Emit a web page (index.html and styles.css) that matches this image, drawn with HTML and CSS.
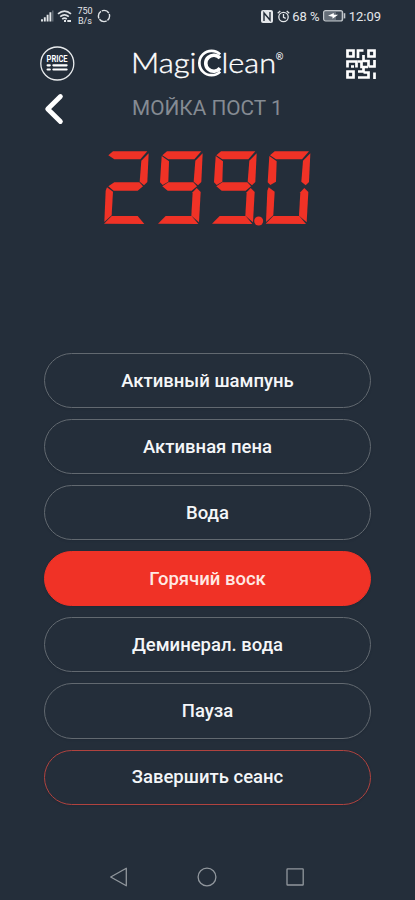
FILE: index.html
```
<!DOCTYPE html>
<html lang="ru">
<head>
<meta charset="utf-8">
<meta name="viewport" content="width=device-width">
<title>MagiClean</title>
<link rel="stylesheet" href="styles.css">
</head>
<body>
<div class="status">
  <svg class="signal" width="14" height="14" viewBox="0 0 14 14"><path d="M2 10.2v2.3M4.8 8.2v4.3M7.6 5.8v6.7M10.4 3.3v9.2" stroke="#e4e7ea" stroke-width="1.9"/><path d="M12.8 1.5v11" stroke="#6d7680" stroke-width="1.2"/></svg>
  <svg class="wifi" width="16" height="14" viewBox="0 0 16 14" fill="none" stroke="#dfe3e6" stroke-width="1.7"><path d="M1 4.8q6.5-5.5 13 0M3.2 7.6q4.3-3.6 8.6 0M5.2 10.1q2.3-2 4.6 0"/><path d="M7 12h2M10.3 12H14" stroke-width="2"/></svg>
  <div class="speed"><span>750</span><span>B/s</span></div>
  <svg class="ring" width="14" height="14" viewBox="0 0 14 14"><circle cx="7" cy="7" r="5.6" fill="none" stroke="#dfe3e6" stroke-width="1.4" stroke-dasharray="7.9 .9" stroke-dashoffset="3"/></svg>
  <span class="spacer"></span>
  <svg class="nfc" width="12" height="13" viewBox="0 0 12 13"><rect width="12" height="13" rx="2" fill="#e4e7ea"/><path d="M3 11V3l6 7V2" fill="none" stroke="#242e3a" stroke-width="1.4"/></svg>
  <svg class="alarm" width="13" height="13" viewBox="0 0 13 13" fill="none" stroke="#e4e7ea" stroke-width="1.3"><circle cx="6.5" cy="7" r="4.7"/><path d="M6.5 4v3.3l2.2 1M.7 3.2 3.3 1M12.3 3.2 9.7 1"/></svg>
  <span class="percent">68 %</span>
  <svg class="battery" width="23" height="12" viewBox="0 0 23 12"><rect x=".6" y=".6" width="19" height="10.4" rx="2" fill="#656e78" stroke="#c2c7cb" stroke-width="1.2"/><path d="M13 2h5v8h-5z" fill="#3d4752"/><path d="M5 5.8 10.8 3v1.8h4.3L9.5 8.7V6.8z" fill="#fff"/><path d="M21.5 3.2v5.2" stroke="#c2c7cb" stroke-width="1.6"/></svg>
  <span class="clock">12:09</span>
</div>

<header class="brandbar">
  <svg class="price" width="36" height="36" viewBox="0 0 36 36"><circle cx="18.3" cy="18.5" r="16.5" fill="none" stroke="#e8ebed" stroke-width="1.3"/><text x="7.6" y="17" textLength="21" lengthAdjust="spacingAndGlyphs">PRICE</text><path d="M8.6 20.3h2.2M14.4 20.3h13.2M8.6 24.5h2.2M14.4 24.5h13.2" stroke="#fff" stroke-width="2.2" stroke-linecap="round"/></svg>
  <svg class="logo" width="154" height="34" viewBox="0 0 154 34">
    <text x="0" y="26.6" textLength="65.5" lengthAdjust="spacingAndGlyphs">Magi</text>
    <text x="90.5" y="26.6" textLength="54.5" lengthAdjust="spacingAndGlyphs">lean</text>
    <text class="mark" x="144.8" y="14">®</text>
    <path d="M89.2 8.4A12.2 12.2 0 1 0 89.2 25.6" fill="none" stroke="#fff" stroke-width="2.7"/>
    <path d="M89 12.2A8 8 0 1 0 89 22.2" fill="none" stroke="#fff" stroke-width="3.6"/>
  </svg>
  <svg class="qr" width="30" height="30" viewBox="0 0 30 30" fill="none" stroke="#fff" stroke-width="2.7"><path d="M1.5 1.5h6v6h-6zM22.5 1.5h6v6h-6zM1.5 22.5h6v6h-6z"/><path d="M12 9V1.5h5.5M17.5 6v6H22.5v5.5M1.5 18.5V12.5h9v6M5 17.5h3M12 12.5h3.5V18H22M22.5 17.5h6V11M12 22.5h5.5v-4M12 28.5h5.5M17.5 23.5h5v5H17.5M28.5 23.5V30"/></svg>
</header>

<div class="titlebar">
  <svg class="back" width="22" height="32" viewBox="0 0 22 32"><path d="M17.4 3.5 4.7 16l12.7 12.5" fill="none" stroke="#fff" stroke-width="4.8" stroke-linecap="round" stroke-linejoin="round"/></svg>
  <h1>МОЙКА ПОСТ 1</h1>
</div>

<svg class="display" role="img" aria-label="299.0" width="225" height="95" viewBox="0 0 675 285">
  <defs>
    <path id="a" d="M40 46 54 34H157L136 58H58z"/>
    <path id="b" d="M161 40 157 126 147 136 134 125 139 62z"/>
    <path id="c" d="M143 144 155 156 150 247 127 227 131 157z"/>
    <path id="d" d="M27 251 50 228H128L148 252z"/>
    <path id="e" d="M36 142 54 155 50 226 28 246 32 152z"/>
    <path id="f" d="M38 48 60 64 58 125 41 135 33 127z"/>
    <path id="g" d="M40 139 58 127H133L144 139 128 152H56z"/>
  </defs>
  <g><use href="#a"/><use href="#b"/><use href="#g"/><use href="#e"/><use href="#d"/></g>
  <g transform="translate(162)"><use href="#a"/><use href="#b"/><use href="#f"/><use href="#g"/><use href="#c"/><use href="#d"/></g>
  <g transform="translate(324)"><use href="#a"/><use href="#b"/><use href="#f"/><use href="#g"/><use href="#c"/><use href="#d"/></g>
  <circle cx="491" cy="243" r="13.5"/>
  <g transform="translate(485)"><use href="#a"/><use href="#b"/><use href="#c"/><use href="#d"/><use href="#e"/><use href="#f"/></g>
</svg>

<main class="modes">
  <button>Активный шампунь</button>
  <button>Активная пена</button>
  <button>Вода</button>
  <button class="active">Горячий воск</button>
  <button>Деминерал. вода</button>
  <button>Пауза</button>
  <button class="finish">Завершить сеанс</button>
</main>

<nav class="system">
  <svg width="20" height="20" viewBox="0 0 20 20"><path d="M17.3 1.2v17.6L1.7 10z"/></svg>
  <svg width="20" height="20" viewBox="0 0 20 20"><circle cx="10" cy="10" r="8.9"/></svg>
  <svg width="20" height="20" viewBox="0 0 20 20"><rect x="2" y="1.8" width="16.2" height="16.2" rx=".6"/></svg>
</nav>
</body>
</html>
```
FILE: styles.css
```
* { box-sizing: border-box; }
body {
  margin: 0;
  width: 415px;
  height: 900px;
  overflow: hidden;
  background: #242e3a;
  color: #fff;
  font-family: Roboto, "Liberation Sans", sans-serif;
  display: flex;
  flex-direction: column;
}
svg { display: block; flex: none; }
.status {
  height: 32px;
  padding: 0 34px 0 40px;
  display: flex;
  align-items: center;
  color: #e4e7ea;
}
.wifi { margin-left: 3px; }
.speed {
  width: 18px;
  margin-left: 3px;
  display: flex;
  flex-direction: column;
  align-items: center;
  font-size: 9px;
  line-height: 10.5px;
}
.ring { margin-left: 3px; }
.spacer { flex: 1; }
.alarm { margin-left: 4px; }
.percent { margin-left: 2px; font-size: 13px; white-space: nowrap; }
.battery { margin-left: 3px; }
.clock { margin-left: 3px; font-size: 13px; }
.brandbar {
  height: 62px;
  padding: 0 39px;
  display: flex;
  align-items: center;
}
.price text { font: 700 8.5px Roboto, sans-serif; fill: #fff; }
.logo { margin-left: 56px; }
.logo text {
  font: 300 26.5px Lato, sans-serif;
  fill: #fff;
  stroke: #fff;
  stroke-width: .35px;
}
.logo .mark { font-size: 9px; stroke-width: .2px; }
.qr { margin-left: auto; margin-top: 2px; }
.titlebar {
  height: 32px;
  margin-top: -1px;
  padding-left: 43px;
  display: flex;
  align-items: center;
}
.titlebar h1 {
  margin: -2px 0 0 67px;
  font-size: 20.8px;
  font-weight: 400;
  line-height: 30px;
  color: #858b93;
  white-space: nowrap;
}
.display { margin: 15px 0 0 95px; fill: #f03226; }
.modes {
  margin: 118px 44px 0;
  display: flex;
  flex-direction: column;
  gap: 11px;
}
.modes button {
  height: 55.1px;
  padding: 0;
  border: 1px solid #626970;
  border-radius: 28px;
  background: #242e3a;
  color: #f4f6f8;
  font: 500 18.5px Roboto, sans-serif;
  box-shadow: 0 1px 2px #1b243055;
}
.modes .active { background: #f03226; border-color: #f03226; color: #ffe9e4; }
.modes .finish { border-color: #b0433f; }
.system {
  margin-top: 62px;
  padding: 0 110px 0 109px;
  display: flex;
  justify-content: space-between;
}
.system svg { fill: none; stroke: #91979d; stroke-width: 1.3; stroke-linejoin: round; }
```
